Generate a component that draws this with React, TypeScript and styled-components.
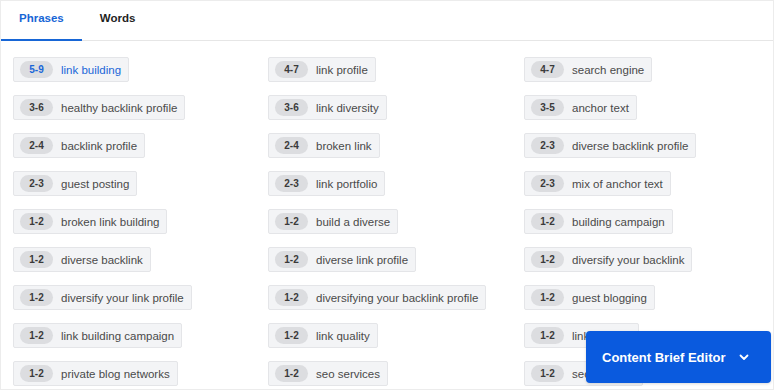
import React, { useState } from "react";
import styled, { createGlobalStyle } from "styled-components";

const Global = createGlobalStyle`
  html, body { margin: 0; padding: 0; background: #fff; }
  body { font-family: "Liberation Sans", Arial, sans-serif; }
  * { box-sizing: border-box; }
`;

const Panel = styled.div`
  position: relative;
  width: 774px;
  height: 390px;
  border: 1px solid #ececec;
  background: #fff;
  overflow: hidden;
`;

const TabBar = styled.div`
  display: flex;
  height: 40px;
  border-bottom: 1px solid #e6e6e6;
`;

const Tab = styled.button<{ $active?: boolean }>`
  appearance: none;
  background: none;
  border: none;
  margin: 0;
  padding: 0 18px 5px 18px;
  height: 40px;
  font-family: inherit;
  font-size: 11.5px;
  font-weight: 700;
  color: ${(p) => (p.$active ? "#1766d6" : "#1f1f1f")};
  border-bottom: 2px solid ${(p) => (p.$active ? "#1766d6" : "transparent")};
  cursor: pointer;
`;

const Grid = styled.div`
  display: grid;
  grid-template-columns: 255px 256px 255px;
  grid-auto-rows: 25px;
  row-gap: 13px;
  padding: 16px 0 0 12px;
`;

const Cell = styled.div`
  display: flex;
  align-items: flex-start;
`;

const Chip = styled.div<{ $active?: boolean }>`
  display: inline-flex;
  align-items: center;
  height: 25px;
  padding: 0 7px 0 6px;
  background: #f3f4f6;
  border: 1px solid #e4e5e8;
  border-radius: 2px;
  gap: 8px;
  font-size: 11.5px;
  color: ${(p) => (p.$active ? "#1a66d8" : "#4a4a4a")};
  white-space: nowrap;
`;

const Badge = styled.span<{ $active?: boolean }>`
  display: inline-flex;
  align-items: center;
  justify-content: center;
  width: 33px;
  height: 17px;
  border-radius: 9px;
  background: #dcdde0;
  font-size: 10px;
  font-weight: 700;
  color: ${(p) => (p.$active ? "#1a66d8" : "#3a3a3a")};
`;

const EditorButton = styled.button`
  position: absolute;
  right: 2px;
  bottom: 6px;
  width: 185px;
  height: 52px;
  border: none;
  border-radius: 4px;
  background: #0a5ade;
  color: #fff;
  font-family: inherit;
  font-size: 13px;
  font-weight: 700;
  display: flex;
  align-items: center;
  padding: 0 0 0 16px;
  gap: 12px;
  cursor: pointer;
  box-shadow: 0 1px 3px rgba(0, 0, 0, 0.15);
`;

const rows: [string, string][][] = [
  [["5-9", "link building"], ["4-7", "link profile"], ["4-7", "search engine"]],
  [["3-6", "healthy backlink profile"], ["3-6", "link diversity"], ["3-5", "anchor text"]],
  [["2-4", "backlink profile"], ["2-4", "broken link"], ["2-3", "diverse backlink profile"]],
  [["2-3", "guest posting"], ["2-3", "link portfolio"], ["2-3", "mix of anchor text"]],
  [["1-2", "broken link building"], ["1-2", "build a diverse"], ["1-2", "building campaign"]],
  [["1-2", "diverse backlink"], ["1-2", "diverse link profile"], ["1-2", "diversify your backlink"]],
  [["1-2", "diversify your link profile"], ["1-2", "diversifying your backlink profile"], ["1-2", "guest blogging"]],
  [["1-2", "link building campaign"], ["1-2", "link quality"], ["1-2", "link velocity"]],
  [["1-2", "private blog networks"], ["1-2", "seo services"], ["1-2", "seo strategy"]],
];

export default function App() {
  const [tab, setTab] = useState("phrases");
  return (
    <>
      <Global />
      <Panel>
        <TabBar>
          <Tab $active={tab === "phrases"} onClick={() => setTab("phrases")}>Phrases</Tab>
          <Tab $active={tab === "words"} onClick={() => setTab("words")}>Words</Tab>
        </TabBar>
        <Grid>
          {rows.flat().map(([range, text], i) => (
            <Cell key={i}>
              <Chip $active={i === 0}>
                <Badge $active={i === 0}>{range}</Badge>
                {text}
              </Chip>
            </Cell>
          ))}
        </Grid>
        <EditorButton>
          Content Brief Editor
          <svg width="12" height="12" viewBox="0 0 12 12" fill="none">
            <path d="M2.5 4.5 L6 8 L9.5 4.5" stroke="#fff" strokeWidth="1.8" strokeLinecap="round" strokeLinejoin="round" />
          </svg>
        </EditorButton>
      </Panel>
    </>
  );
}
